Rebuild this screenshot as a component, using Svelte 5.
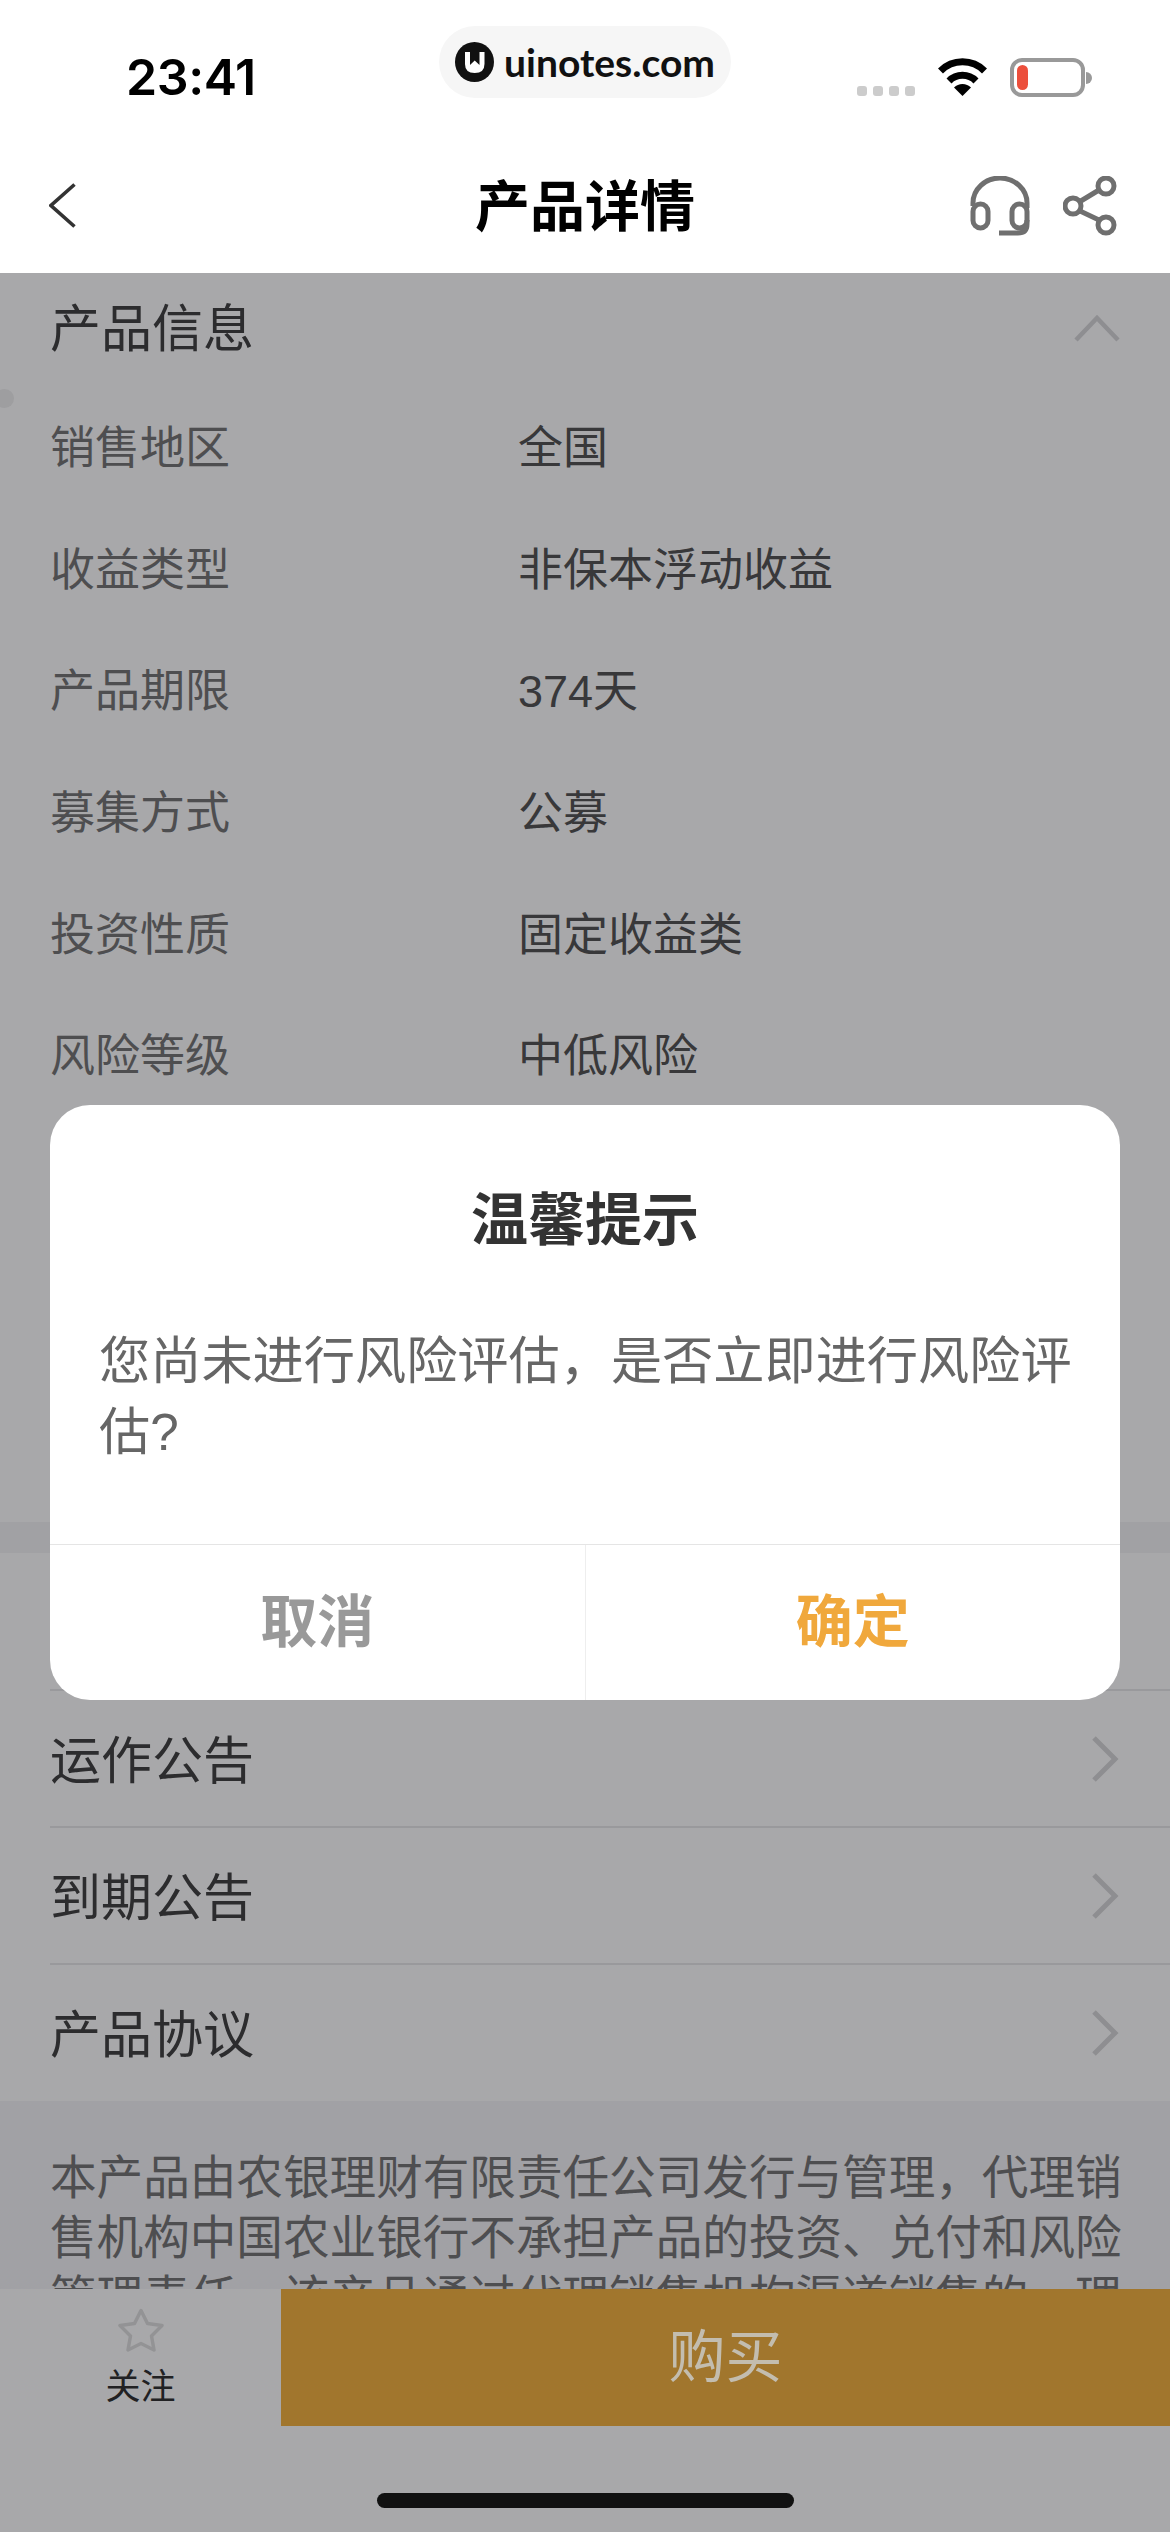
<script>
	const infoRows = [
		{ label: '销售地区', value: '全国' },
		{ label: '收益类型', value: '非保本浮动收益' },
		{ label: '产品期限', value: '374天' },
		{ label: '募集方式', value: '公募' },
		{ label: '投资性质', value: '固定收益类' },
		{ label: '风险等级', value: '中低风险' }
	];

	const linkRows = ['运作公告', '到期公告', '产品协议'];
</script>

<div class="page">
	<header class="top">
		<div class="status">
			<span class="time">23:41</span>
			<div class="status-icons">
				<div class="signal">
					<i></i><i></i><i></i><i></i>
				</div>
				<svg class="wifi" width="51" height="38" viewBox="0 0 51 38">
					<path d="M3.5 13 A31 31 0 0 1 47.5 13" fill="none" stroke="#000" stroke-width="7" />
					<path d="M12 23 A19 19 0 0 1 39 23" fill="none" stroke="#000" stroke-width="7" />
					<path d="M25.5 38 L17 29.5 A12 12 0 0 1 34 29.5 Z" fill="#000" />
				</svg>
				<div class="battery">
					<div class="battery-level"></div>
				</div>
			</div>
		</div>
		<nav class="nav">
			<svg class="back" width="27" height="45" viewBox="0 0 27 45">
				<path d="M25.5 1.5 L2 22.5 L25.5 43.5" fill="none" stroke="#333" stroke-width="3.6" />
			</svg>
			<h1>产品详情</h1>
			<div class="nav-actions">
				<svg width="60" height="60" viewBox="0 0 60 60" fill="none" stroke="#6f6f6f" stroke-width="5">
					<path d="M3 30 V27 A27 25 0 0 1 57 27 V32" />
					<rect x="3" y="28" width="15" height="24" rx="7.5" />
					<rect x="42" y="28" width="15" height="24" rx="7.5" />
					<path d="M57 44 V48 Q57 57 48 57 H29" />
				</svg>
				<svg width="55" height="60" viewBox="0 0 55 60" fill="none" stroke="#6f6f6f" stroke-width="5">
					<circle cx="43" cy="10" r="8" />
					<circle cx="10" cy="30" r="8" />
					<circle cx="43" cy="49" r="8" />
					<path d="M17 25.500 L36 14 M17 35 L36 44" />
				</svg>
			</div>
		</nav>
	</header>

	<section class="info">
		<div class="info-head">
			<h2>产品信息</h2>
			<svg width="46" height="27" viewBox="0 0 46 27">
				<path d="M2 25 L23 3 L44 25" fill="none" stroke="#d8d8da" stroke-width="4.5" />
			</svg>
		</div>
		{#each infoRows as row}
			<div class="info-row">
				<span class="info-label">{row.label}</span>
				<span class="info-value">{row.value}</span>
			</div>
		{/each}
	</section>

	<div class="band"></div>

	<section class="links">
		{#each linkRows as link}
			<div class="link-row">
				<span class="link-text">{link}</span>
				<svg width="30" height="48" viewBox="0 0 30 48">
					<path d="M4 3 L25 24 L4 45" fill="none" stroke="#d8d8da" stroke-width="5" />
				</svg>
			</div>
		{/each}
	</section>

	<section class="disclaimer">
		<p>本产品由农银理财有限责任公司发行与管理，代理销售机构中国农业银行不承担产品的投资、兑付和风险管理责任。该产品通过代理销售机构渠道销售的，理</p>
	</section>

	<div class="bottom">
		<div class="bar">
			<div class="follow">
				<svg width="46" height="46" viewBox="0 0 46 46">
					<path
						d="M23 2.500 L29.500 15.500 L44 17.500 L33.500 28 L36 42 L23 35.500 L10 42 L12.500 28 L2 17.500 L16.500 15.500 Z"
						fill="none"
						stroke="#e0e0e0"
						stroke-width="3.500"
						stroke-linejoin="round"
					/>
				</svg>
				<span>关注</span>
			</div>
			<div class="buy"><span>购买</span></div>
		</div>
	</div>

	<div class="scrim"></div>
	<div class="home-indicator"></div>
	<div class="float-dot"></div>

	<div class="watermark">
		<svg width="39" height="40" viewBox="0 0 39 40">
			<ellipse cx="19.5" cy="20" rx="19.5" ry="20" fill="#111" />
			<path d="M10 10 H29.5 V22 Q29.5 31 19.7 31 Q10 31 10 22 Z" fill="#fff" />
			<path d="M15 10 V23 L19.7 18.5 L24.5 23 V10 Z" fill="#111" />
		</svg>
		<span>uinotes.com</span>
	</div>

	<div class="dialog">
		<h3>温馨提示</h3>
		<p>您尚未进行风险评估，是否立即进行风险评估?</p>
		<div class="dialog-actions">
			<button class="cancel">取消</button>
			<button class="ok">确定</button>
		</div>
	</div>
</div>

<style>
	:global(body) {
		margin: 0;
	}

	.page {
		position: relative;
		width: 1170px;
		height: 2532px;
		overflow: hidden;
		background: #fff;
		font-family: 'Liberation Sans', 'Noto Sans CJK SC', sans-serif;
		color: #333;
	}

	.top {
		height: 273px;
		display: flex;
		flex-direction: column;
	}

	.status {
		height: 138px;
		box-sizing: border-box;
		padding: 50px 85px 0 126px;
		display: flex;
		justify-content: space-between;
		align-items: flex-start;
	}

	.time {
		font-family: Inter, sans-serif;
		font-weight: 600;
		font-size: 50px;
		line-height: 54px;
		letter-spacing: -0.4px;
		color: #000;
	}

	.status-icons {
		display: flex;
		align-items: flex-end;
		margin-top: 8px;
	}

	.signal {
		display: flex;
		gap: 6px;
		margin-right: 22px;
		padding-bottom: 1px;
	}

	.signal i {
		width: 10px;
		height: 10px;
		border-radius: 3px;
		background: #ccc;
	}

	.wifi {
		margin-right: 22px;
		margin-bottom: 1px;
	}

	.battery {
		position: relative;
		width: 75px;
		height: 39px;
		box-sizing: border-box;
		border: 4px solid #999;
		border-radius: 12px;
		padding: 3px;
	}

	.battery::after {
		content: '';
		position: absolute;
		right: -11px;
		top: 10px;
		width: 6px;
		height: 12px;
		border-radius: 0 6px 6px 0;
		background: #999;
	}

	.battery-level {
		width: 11px;
		height: 100%;
		border-radius: 6px;
		background: #ec4f3c;
	}

	.nav {
		flex: 1;
		display: flex;
		align-items: center;
		justify-content: space-between;
		padding: 0 52px 0 49px;
		position: relative;
	}

	.nav h1 {
		position: absolute;
		left: 0;
		right: 0;
		top: 29px;
		margin: 0;
		text-align: center;
		font-size: 55px;
		line-height: 80px;
		font-weight: 700;
		color: #000;
	}

	.nav-actions {
		display: flex;
		align-items: center;
		gap: 33px;
		margin-top: 1px;
	}

	.info {
		height: 1249px;
	}

	.info-head {
		height: 111px;
		display: flex;
		align-items: center;
		justify-content: space-between;
		padding: 0 50px;
	}

	.info-head h2 {
		margin: 0 0 8px;
		font-size: 51px;
		font-weight: 400;
		color: #444;
	}

	.info-row {
		height: 121.6px;
		display: flex;
		align-items: center;
		padding-left: 50px;
		font-size: 45px;
	}

	.info-label {
		width: 468px;
		color: #777;
	}

	.info-value {
		color: #555;
	}

	.band {
		height: 31px;
		background: #f4f4f6;
	}

	.links {
		padding-top: 136px;
		padding-left: 50px;
	}

	.link-row {
		height: 137px;
		box-sizing: border-box;
		border-top: 2px solid #e8e8ea;
		display: flex;
		align-items: center;
		justify-content: space-between;
		padding-right: 50px;
		font-size: 51px;
		color: #444;
	}

	.link-text {
		margin-bottom: 4px;
	}

	.disclaimer {
		margin-top: 1px;
		height: 188px;
		overflow: hidden;
		background: #f5f5f7;
		padding: 47px 48px 0 50px;
		box-sizing: border-box;
	}

	.disclaimer p {
		margin: 0;
		font-size: 46.6px;
		line-height: 60px;
		color: #777;
	}

	.bottom {
		position: absolute;
		left: 0;
		right: 0;
		bottom: 0;
		height: 243px;
		background: #fff;
	}

	.bar {
		height: 137px;
		display: flex;
	}

	.follow {
		width: 281px;
		display: flex;
		flex-direction: column;
		align-items: center;
		padding-top: 19px;
		box-sizing: border-box;
		font-size: 35px;
		color: #333;
	}

	.follow span {
		margin-top: 9px;
		line-height: 48px;
	}

	.buy {
		flex: 1;
		display: flex;
		align-items: center;
		justify-content: center;
		padding-bottom: 11px;
		background: #f5b342;
		font-size: 57px;
	}

	/* the label reads lighter than the scrim would leave it */
	.buy span {
		position: relative;
		z-index: 1;
		color: #c3bdaf;
	}

	.scrim {
		position: absolute;
		left: 0;
		right: 0;
		top: 273px;
		bottom: 0;
		background: rgba(0, 0, 6, 0.342);
	}

	.home-indicator {
		position: absolute;
		left: 377px;
		top: 2493px;
		width: 417px;
		height: 15px;
		border-radius: 8px;
		background: #111;
	}

	.float-dot {
		position: absolute;
		left: -5px;
		top: 389px;
		width: 19px;
		height: 19px;
		border-radius: 50%;
		background: #9e9ea0;
	}

	.watermark {
		position: absolute;
		left: 439px;
		top: 26px;
		width: 292px;
		height: 72px;
		box-sizing: border-box;
		padding-left: 16px;
		border-radius: 36px;
		background: #f6f6f6;
		display: flex;
		align-items: center;
		gap: 10px;
		font-family: Lato, sans-serif;
		font-weight: 700;
		font-size: 39px;
		color: #111;
	}

	.dialog {
		position: absolute;
		left: 50px;
		top: 1105px;
		width: 1070px;
		height: 595px;
		display: flex;
		flex-direction: column;
		background: #fff;
		border-radius: 40px;
		overflow: hidden;
	}

	.dialog h3 {
		margin: 0;
		padding-top: 75px;
		text-align: center;
		font-size: 57px;
		line-height: 80px;
		font-weight: 700;
		color: #333;
	}

	.dialog p {
		margin: 66px 0 0;
		padding: 0 48px 0 49px;
		font-size: 51.2px;
		line-height: 71px;
		color: #666;
	}

	.dialog-actions {
		margin-top: auto;
		height: 156px;
		display: flex;
		border-top: 1px solid #e5e5e5;
		box-sizing: border-box;
	}

	.dialog-actions button {
		flex: 1;
		border: 0;
		background: none;
		font-family: inherit;
		font-size: 57px;
		font-weight: 700;
		padding: 0 0 11px;
	}

	.cancel {
		color: #999;
		border-right: 1px solid #eee !important;
	}

	.ok {
		color: #f0a83c;
	}
</style>
